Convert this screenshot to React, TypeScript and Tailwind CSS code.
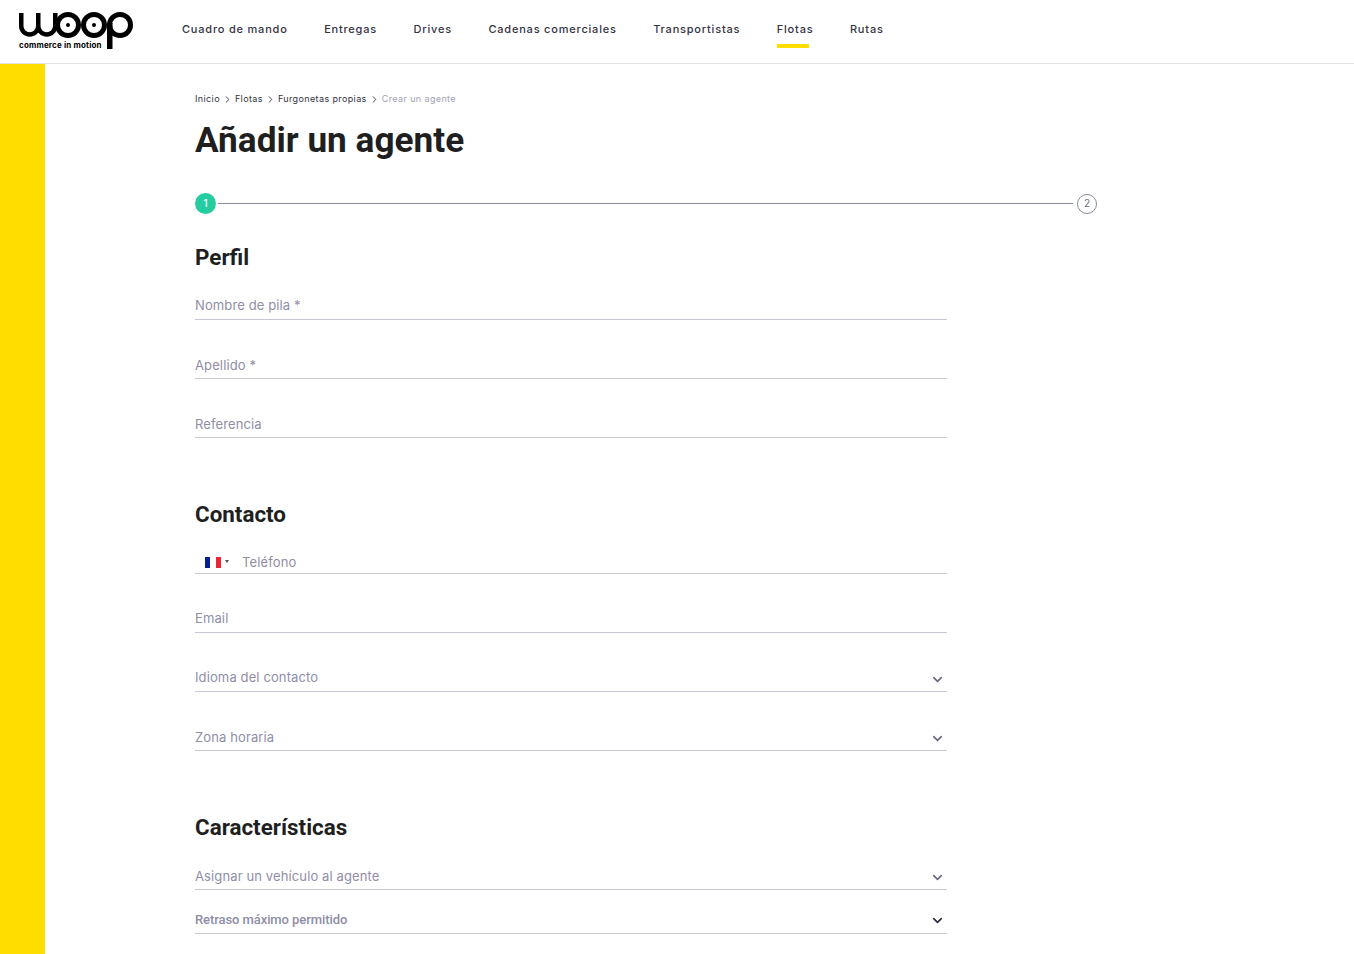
import { ChevronDown, ChevronRight } from "lucide-react";

const navItems = [
  "Cuadro de mando",
  "Entregas",
  "Drives",
  "Cadenas comerciales",
  "Transportistas",
  "Flotas",
  "Rutas",
];

function Logo() {
  return (
    <div className="relative w-[116px] h-[36px]">
      <svg className="overflow-visible" width="116" height="36" viewBox="0 0 116 36" fill="none">
        <path
          d="M2.25 0V13a8.5 8.5 0 0 0 17 0V0M19.25 13a8.5 8.5 0 0 0 17 0V0"
          stroke="#000"
          strokeWidth="4.5"
        />
        <circle cx="49" cy="12" r="10.5" stroke="#000" strokeWidth="5" />
        <circle cx="49" cy="12" r="2" fill="#000" />
        <circle cx="75" cy="12" r="10.5" stroke="#000" strokeWidth="5" />
        <circle cx="75" cy="12" r="2" fill="#000" />
        <circle cx="101" cy="12" r="10.5" stroke="#000" strokeWidth="5" />
        <rect x="88" y="10" width="5.5" height="26" fill="#000" />
      </svg>
      <span className="absolute left-0 top-[27px] text-[8px] leading-[10px] font-bold tracking-[0.17px] text-black whitespace-nowrap">
        commerce in motion
      </span>
    </div>
  );
}

function Field({
  label,
  select,
  raised,
  top,
}: {
  label: string;
  select?: boolean;
  raised?: boolean;
  top: string;
}) {
  return (
    <div className={`flex items-center justify-between border-b border-[#c8c7d6] h-[26px] w-[752px] ${top}`}>
      <span className={`text-[13px] tracking-[0.12px] text-[#8f8ea6] ${raised ? "pb-[1px]" : ""}`}>{label}</span>
      {select && (
        <ChevronDown className="self-end mb-[4px] size-[15px] mr-[2px] text-[#66657a]" strokeWidth={2.5} />
      )}
    </div>
  );
}

function SectionTitle({ children, className }: { children: string; className: string }) {
  return (
    <h2 className={`font-['Roboto',sans-serif] text-[22.4px] leading-[28px] font-bold text-[#1f1f1f] ${className}`}>
      {children}
    </h2>
  );
}

export default function App() {
  return (
    <div className="h-[954px] overflow-hidden bg-white font-['Inter',sans-serif]">
      <header className="flex h-[64px] border-b border-[#e5e5e5] pl-[19px]">
        <div className="pt-[13px]">
          <Logo />
        </div>
        <nav className="flex ml-[47px] gap-[36.5px]">
          {navItems.map((item) => (
            <a
              key={item}
              className="relative pt-[22px] text-[11px] leading-[15px] font-medium tracking-[0.8px] text-[#34333f]"
            >
              {item}
              {item === "Flotas" && (
                <span className="absolute left-0 top-[44px] h-[4px] w-[32px] bg-[#ffdd00]" />
              )}
            </a>
          ))}
        </nav>
      </header>

      <div className="flex h-[890px]">
        <aside className="w-[45px] bg-[#ffdd00]" />
        <main className="pl-[150px] pt-[28px]">
          <div className="flex items-center text-[9px] leading-[14px] tracking-[0.38px] text-[#34333f]">
            <span>Inicio</span>
            <ChevronRight className="size-[11px] mx-[2px]" />
            <span>Flotas</span>
            <ChevronRight className="size-[11px] mx-[2px]" />
            <span>Furgonetas propias</span>
            <ChevronRight className="size-[11px] mx-[2px]" />
            <span className="text-[#a3a2b8]">Crear un agente</span>
          </div>

          <h1 className="mt-[11px] font-['Roboto',sans-serif] text-[35.2px] leading-[46px] font-bold text-[#1f1f1f]">
            Añadir un agente
          </h1>

          <div className="mt-[30px] flex items-center w-[902px]">
            <span className="flex size-[21px] items-center justify-center rounded-full bg-[#25cca0] text-[10px] font-medium text-white">
              1
            </span>
            <span className="flex-1 ml-[2px] mr-[4px] h-px bg-[#8a8a9e]" />
            <span className="flex size-[20px] items-center justify-center rounded-full border border-[#8a8a9e] text-[10px] text-[#6f6e85]">
              2
            </span>
          </div>

          <SectionTitle className="mt-[29px]">Perfil</SectionTitle>
          <Field label="Nombre de pila *" raised top="mt-[23px]" />
          <Field label="Apellido *" top="mt-[33px]" />
          <Field label="Referencia" top="mt-[33px]" />

          <SectionTitle className="mt-[62px]">Contacto</SectionTitle>
          <div className="mt-[20px] flex items-center border-b border-[#c8c7d6] h-[26px] pt-[4px] w-[752px]">
            <span className="ml-[10px] flex h-[11px] w-[16px]">
              <span className="flex-1 bg-[#0a1f8f]" />
              <span className="flex-1 bg-white" />
              <span className="flex-1 bg-[#ee2436]" />
            </span>
            <span className="ml-[4px] mb-[2px] size-0 border-x-[2.5px] border-t-[3px] border-x-transparent border-t-[#555]" />
            <span className="ml-[13px] text-[13px] tracking-[0.12px] text-[#8f8ea6]">Teléfono</span>
          </div>
          <Field label="Email" raised top="mt-[33px]" />
          <Field label="Idioma del contacto" select raised top="mt-[33px]" />
          <Field label="Zona horaria" select top="mt-[33px]" />

          <SectionTitle className="mt-[62px]">Características</SectionTitle>
          <Field label="Asignar un vehículo al agente" select top="mt-[23px]" />
          <div className="mt-[18px] flex items-center justify-between border-b border-[#c8c7d6] h-[26px] w-[752px]">
            <span className="pb-[1px] font-['Roboto',sans-serif] text-[13px] font-medium tracking-[-0.08px] text-[#8f8ea6]">
              Retraso máximo permitido
            </span>
            <ChevronDown className="self-end mb-[5px] size-[15px] mr-[2px] text-[#27263a]" strokeWidth={2.5} />
          </div>
        </main>
      </div>
    </div>
  );
}
